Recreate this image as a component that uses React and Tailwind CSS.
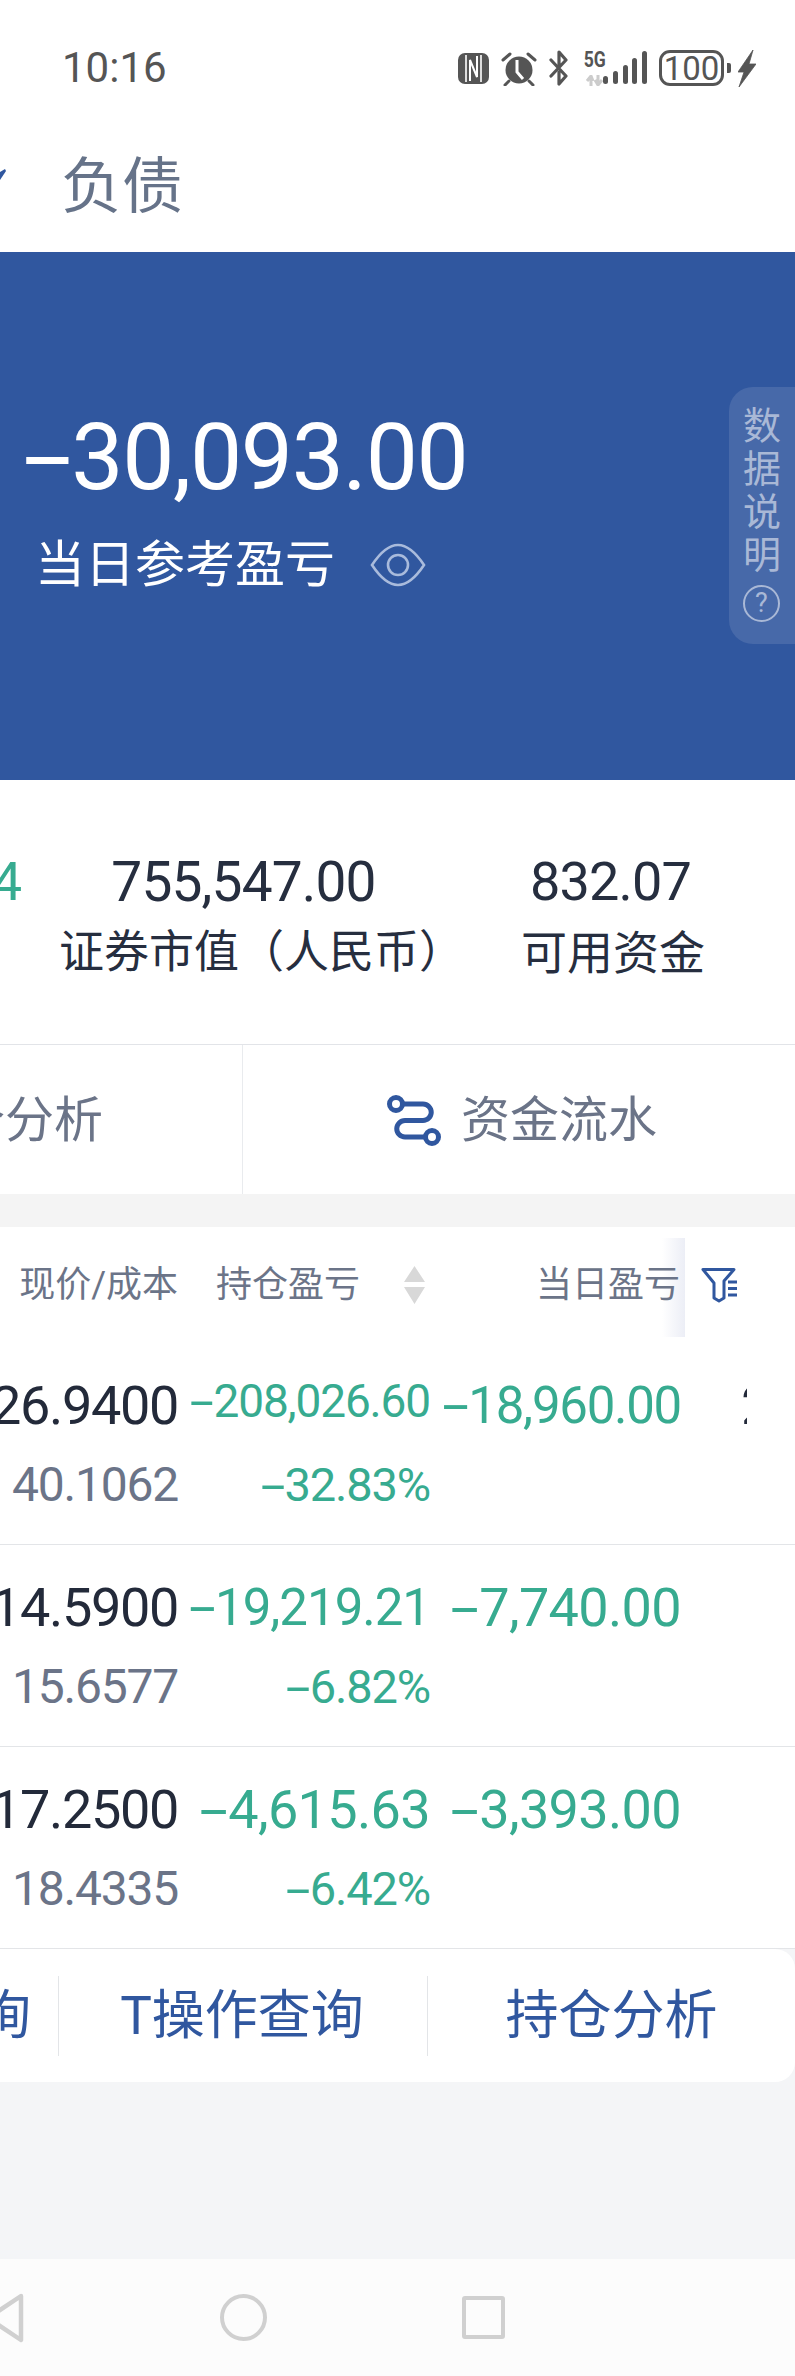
const GREEN = "text-[#37ab90]";
const Minus = () => <span className="inline-block mx-[.14em] scale-x-[1.9]">-</span>;

function Neg({ children }) {
  return (
    <>
      <Minus />
      {children}
    </>
  );
}

function StatusIcons() {
  return (
    <div className="flex items-center text-[#555555]">
      <svg width="31" height="33" viewBox="0 0 31 33" className="ml-[396px]">
        <rect x="0" y="1" width="31" height="31" rx="7" fill="#555555" />
        <path d="M8 3v27M23 3v27" stroke="#ffffff" strokeWidth="1.6" />
        <path d="M12 29V8l7 17V4" fill="none" stroke="#ffffff" strokeWidth="2" />
      </svg>
      <svg width="36" height="35" viewBox="0 0 36 35" className="ml-[12px]">
        <circle cx="18" cy="19" r="13.5" fill="#555555" />
        <path d="M16 9v12l6 7" fill="none" stroke="#ffffff" strokeWidth="3" />
        <path d="M2 9l7-6M34 9l-7-6M8 30l-4 4M28 30l4 4" stroke="#555555" strokeWidth="3" strokeLinecap="round" />
      </svg>
      <svg width="20" height="36" viewBox="0 0 20 36" className="ml-[12px]">
        <path d="M2 10l15 16-7 8V22M10 14V2l7 8L2 26" fill="none" stroke="#555555" strokeWidth="3.2" strokeLinejoin="round" strokeLinecap="round" />
      </svg>
      <div className="ml-[14px] flex h-[36px] w-[24px] flex-col items-center justify-between">
        <span className="origin-top scale-x-[.8] text-[22px] leading-[19px] font-bold">5G</span>
        <svg width="22" height="11" viewBox="0 0 22 11">
          <path d="M7 11V2M3 6l4-5 2 5M14 0v9M11 5l3 5 4-5" fill="none" stroke="#cccccc" strokeWidth="3" />
        </svg>
      </div>
      <svg width="46" height="34" viewBox="0 0 46 34" className="-ml-[5px]">
        <g fill="#555555">
          <rect x="1" y="25" width="5" height="8" rx="2.5" />
          <rect x="11" y="20" width="5" height="13" rx="2.5" />
          <rect x="21" y="14" width="5" height="19" rx="2.5" />
          <rect x="30" y="7" width="5" height="26" rx="2.5" />
          <rect x="40" y="0" width="5" height="33" rx="2.5" />
        </g>
      </svg>
      <div className="ml-[11px] flex h-[36px] w-[65px] items-center justify-center rounded-[11px] border-[3px] border-[#555555] text-[33px] leading-none">
        100
      </div>
      <div className="ml-[3px] h-[10px] w-[4px] rounded-r-[2px] bg-[#555555]" />
      <svg width="18" height="37" viewBox="0 0 18 37" className="ml-[7px]">
        <path d="M15 0L0 22h6L1 37 18 14h-7z" fill="#555555" stroke="#555555" strokeWidth="0.8" />
      </svg>
    </div>
  );
}

function Row({ price, cost, hold, pct, day, holdClass, dayClass, fragment }) {
  return (
    <div className="grid h-[202px] grid-cols-[178px_252px_251px_114px] border-b border-[#e3e5e8] pt-[35px]">
      <div className="flex min-w-0 flex-col items-end">
        <div className="h-[56px] text-[54px] leading-[56px] tracking-[-.025em] whitespace-nowrap text-[#232a3a]">{price}</div>
        <div className="mt-[27px] h-[48px] text-[48px] leading-[48px] tracking-[-.025em] whitespace-nowrap text-[#6b7488]">{cost}</div>
      </div>
      <div className={`flex min-w-0 flex-col items-end ${GREEN}`}>
        <div className={`h-[56px] leading-[56px] whitespace-nowrap ${holdClass}`}>
          <Neg>{hold}</Neg>
        </div>
        <div className="mt-[27px] h-[48px] text-[47px] leading-[48px] tracking-[-.025em] whitespace-nowrap">
          <Neg>{pct}</Neg>
        </div>
      </div>
      <div className={`flex min-w-0 flex-col items-end ${GREEN}`}>
        <div className={`h-[56px] leading-[56px] whitespace-nowrap ${dayClass}`}>
          <Neg>{day}</Neg>
        </div>
      </div>
      <div className="min-w-0 pl-[60px]">
        {fragment && <div className="h-[56px] w-[6px] overflow-hidden text-[54px] leading-[56px] text-[#232a3a]">2</div>}
      </div>
    </div>
  );
}

export default function App() {
  return (
    <div className="flex h-[2376px] w-[795px] flex-col overflow-hidden bg-[#f4f5f7] font-['Roboto','Noto_Sans_CJK_SC',sans-serif]">
      <div className="h-[252px] shrink-0 bg-white">
        <div className="relative h-[100px] pt-[36px]">
          <div className="flex h-[64px] items-center">
            <span className="ml-[62px] w-0 text-[42px] leading-none whitespace-nowrap text-[#555555]">10:16</span>
            <StatusIcons />
          </div>
        </div>
        <div className="flex h-[152px] items-start pt-[57px]">
          <svg width="6" height="14" viewBox="0 0 6 14" className="mt-[11px] shrink-0">
            <path d="M0 12V4l5-3 1 2z" fill="#30579f" />
          </svg>
          <span className="ml-[55px] text-[61px] leading-[60px] text-[#667389]">负债</span>
        </div>
      </div>

      <div className="relative h-[528px] shrink-0 bg-[#30579f] pt-[160px]">
        <div className="pl-[21px] text-[93px] leading-[92px] tracking-[-.015em] text-white">
          <Neg>30,093.00</Neg>
        </div>
        <div className="mt-[37px] flex h-[48px] items-center pl-[35px]">
          <span className="text-[50px] leading-[48px] text-white">当日参考盈亏</span>
          <svg width="56" height="44" viewBox="0 0 56 44" className="ml-[35px]">
            <path d="M2 22C10 10 18 2 28 2s18 8 26 20c-8 12-16 20-26 20S10 34 2 22z" fill="none" stroke="#a9bbdc" strokeWidth="2.6" />
            <circle cx="28" cy="22" r="10" fill="none" stroke="#a9bbdc" strokeWidth="2.6" />
          </svg>
        </div>
        <div className="absolute top-[135px] left-[729px] flex h-[257px] w-[66px] flex-col rounded-l-[24px] bg-[#4769a9] pt-[18px] pl-[14px] text-[#a9b8d6]">
          <div className="w-[40px] text-[38px] leading-[43px]">数据说明</div>
          <div className="mt-[8px] flex h-[37px] w-[37px] items-center justify-center rounded-full border-2 border-[#a9b8d6] text-[27px] leading-none">?</div>
        </div>
      </div>

      <div className="h-[265px] shrink-0 border-b border-[#e2e4e8] bg-white pt-[72px]">
        <div className="flex">
          <div className="w-[59px]">
            <div className={`flex h-[60px] w-[22px] justify-end text-[54px] leading-[60px] ${GREEN}`}>4</div>
          </div>
          <div className="w-[405px] text-[#262e3f]">
            <div className="h-[60px] pr-[36px] text-center text-[55px] leading-[60px] tracking-[-.015em]">755,547.00</div>
            <div className="mt-[16px] text-[45px] leading-[50px] whitespace-nowrap">证券市值（人民币）</div>
          </div>
          <div className="ml-[57px] w-[184px] text-[#262e3f]">
            <div className="h-[60px] pr-[5px] text-center text-[54px] leading-[60px] tracking-[-.015em]">832.07</div>
            <div className="mt-[16px] text-[46px] leading-[50px] whitespace-nowrap">可用资金</div>
          </div>
        </div>
      </div>

      <div className="flex h-[149px] shrink-0 bg-white pt-[2px] text-[49px] leading-none text-[#6b7488]">
        <div className="-mt-[2px] flex w-[243px] border-r border-[#e9ebee]">
          <div className="flex h-full w-[103px] items-center justify-end pt-[2px] whitespace-nowrap">持仓分析</div>
        </div>
        <div className="flex flex-1 items-center justify-center pl-[6px]">
          <svg width="55" height="51" viewBox="0 0 55 51">
            <g fill="none" stroke="#30579f" strokeWidth="5" strokeLinecap="round">
              <circle cx="9" cy="9" r="6.5" />
              <circle cx="45" cy="42" r="6.5" />
              <path d="M16 9h20a8 8 0 0 1 0 16.500H18a8 8 0 0 0 0 16.500h20" />
            </g>
          </svg>
          <span className="ml-[19px]">资金流水</span>
        </div>
      </div>

      <div className="h-[33px] shrink-0 bg-[#f4f4f4]" />

      <div className="relative grid h-[116px] shrink-0 grid-cols-[178px_252px_250px_115px] items-center bg-white text-[36px] leading-none text-[#6b7488]">
        <div className="flex justify-end whitespace-nowrap">现价/成本</div>
        <div className="flex items-center pl-[38px]">
          <span className="whitespace-nowrap">持仓盈亏</span>
          <svg width="21" height="38" viewBox="0 0 21 38" className="ml-[44px]">
            <path d="M10.500 0L21 16H0zM0 21h21L10.500 38z" fill="#d8d8d8" />
          </svg>
        </div>
        <div className="relative z-10 flex justify-end whitespace-nowrap">当日盈亏</div>
        <div className="pl-[20px]">
          <svg width="38" height="38" viewBox="0 0 38 38">
            <path d="M3 3.500h31L24 15v17l-5 3-5-3V17z" fill="none" stroke="#30579f" strokeWidth="3" strokeLinejoin="round" />
            <path d="M28 16h9M28 22.500h9M28 29h9" stroke="#30579f" strokeWidth="3" />
          </svg>
        </div>
        <div className="absolute top-[11px] left-[662px] h-[99px] w-[23px] bg-gradient-to-r from-white/0 to-[#eceef6]" />
      </div>

      <div className="shrink-0 bg-white">
        <Row price="26.9400" cost="40.1062" hold="208,026.60" pct="32.83%" day="18,960.00" holdClass="-mt-[5px] mb-[5px] text-[46px] tracking-[-.025em]" dayClass="text-[51px] tracking-[-.025em]" fragment />
        <Row price="14.5900" cost="15.6577" hold="19,219.21" pct="6.82%" day="7,740.00" holdClass="text-[51px] tracking-[-.02em]" dayClass="text-[54px] tracking-[-.012em]" />
        <Row price="17.2500" cost="18.4335" hold="4,615.63" pct="6.42%" day="3,393.00" holdClass="text-[54px] tracking-[-.012em]" dayClass="text-[54px] tracking-[-.012em]" />
      </div>

      <div className="flex h-[133px] shrink-0 items-center rounded-r-[20px] bg-white pt-[1px] text-[53px] leading-none text-[#30579f]">
        <div className="flex h-[80px] w-[59px] items-center justify-end border-r border-[#e3e5e8] pr-[27px] whitespace-nowrap">查询</div>
        <div className="flex h-[80px] w-[369px] items-center justify-center border-r border-[#e3e5e8] pr-[2px] whitespace-nowrap">T操作查询</div>
        <div className="flex flex-1 items-center justify-center whitespace-nowrap">持仓分析</div>
      </div>

      <div className="flex-1" />

      <div className="flex h-[117px] shrink-0 items-center bg-[#fcfcfc]">
        <svg width="24" height="50" viewBox="0 0 24 50">
          <path d="M21 3L-12 25 21 47z" fill="none" stroke="#d0d0d0" strokeWidth="4.500" strokeLinejoin="round" />
        </svg>
        <div className="ml-[196px] h-[47px] w-[47px] rounded-full border-[4.5px] border-[#d0d0d0]" />
        <div className="ml-[195px] h-[43px] w-[43px] rounded-[3px] border-[4px] border-[#d0d0d0]" />
      </div>
    </div>
  );
}
